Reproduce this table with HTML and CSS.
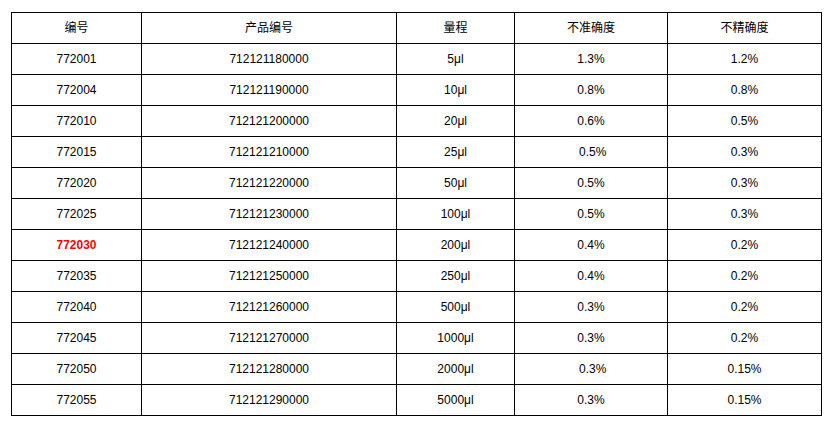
FILE: index.html
```html
<!DOCTYPE html>
<html lang="zh">
<head>
<meta charset="utf-8">
<title>规格表</title>
<link rel="stylesheet" href="styles.css">
</head>
<body>
<table class="spec">
  <colgroup>
    <col class="c1"><col class="c2"><col class="c3"><col class="c4"><col class="c5">
  </colgroup>
  <thead>
    <tr><th>编号</th><th>产品编号</th><th>量程</th><th>不准确度</th><th>不精确度</th></tr>
  </thead>
  <tbody>
    <tr><td>772001</td><td>712121180000</td><td>5μl</td><td>1.3%</td><td>1.2%</td></tr>
    <tr><td>772004</td><td>712121190000</td><td>10μl</td><td>0.8%</td><td>0.8%</td></tr>
    <tr><td>772010</td><td>712121200000</td><td>20μl</td><td>0.6%</td><td>0.5%</td></tr>
    <tr><td>772015</td><td>712121210000</td><td>25μl</td><td>&nbsp;0.5%</td><td>0.3%</td></tr>
    <tr><td>772020</td><td>712121220000</td><td>50μl</td><td>0.5%</td><td>0.3%</td></tr>
    <tr><td>772025</td><td>712121230000</td><td>100μl</td><td>0.5%</td><td>0.3%</td></tr>
    <tr><td class="hl">772030</td><td>712121240000</td><td>200μl</td><td>0.4%</td><td>0.2%</td></tr>
    <tr><td>772035</td><td>712121250000</td><td>250μl</td><td>0.4%</td><td>0.2%</td></tr>
    <tr><td>772040</td><td>712121260000</td><td>500μl</td><td>0.3%</td><td>0.2%</td></tr>
    <tr><td>772045</td><td>712121270000</td><td>1000μl</td><td>0.3%</td><td>0.2%</td></tr>
    <tr><td>772050</td><td>712121280000</td><td>2000μl</td><td>&nbsp;0.3%</td><td>0.15%</td></tr>
    <tr><td>772055</td><td>712121290000</td><td>5000μl</td><td>0.3%</td><td>0.15%</td></tr>
  </tbody>
</table>
</body>
</html>
```
FILE: styles.css
```css
html, body {
  margin: 0;
  padding: 0;
  background: #fff;
}
body {
  padding: 12px 0 0 11px;
  font-family: "Liberation Sans", Arial, "Noto Sans CJK SC", sans-serif;
  font-size: 12px;
  color: #000;
}
.spec {
  border-collapse: collapse;
  table-layout: fixed;
  width: 810px;
}
.spec .c1 { width: 130px; }
.spec .c2 { width: 255px; }
.spec .c3 { width: 118px; }
.spec .c4 { width: 153px; }
.spec .c5 { width: 154px; }
.spec th,
.spec td {
  border: 1px solid #000;
  height: 30px;
  padding: 0;
  text-align: center;
  vertical-align: middle;
  font-weight: normal;
  line-height: 16px;
  white-space: pre;
}
.spec .hl {
  color: #ff0000;
  font-weight: bold;
}
```
